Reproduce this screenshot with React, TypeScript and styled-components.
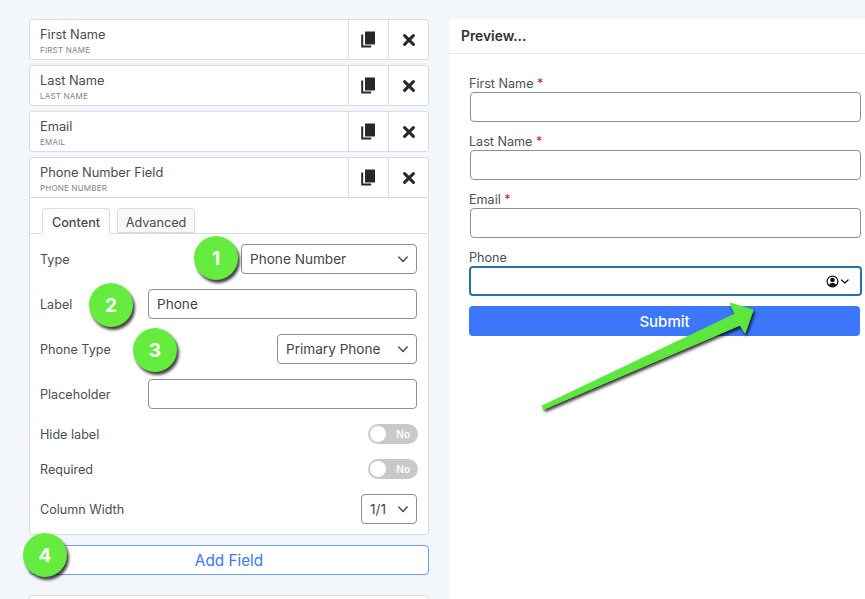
import React from "react";
import styled, { createGlobalStyle } from "styled-components";

const Global = createGlobalStyle`
  html, body { margin: 0; padding: 0; background: #f3f7fb; }
  body { font-family: Inter, "Liberation Sans", sans-serif; color: #454b53; -webkit-font-smoothing: antialiased; }
  * { box-sizing: border-box; }
`;

const Page = styled.div`
  position: relative;
  width: 865px;
  height: 599px;
  overflow: hidden;
  display: flex;
  gap: 20px;
  padding: 19px 0 0 29px;
`;
const LeftColumn = styled.div`
  width: 400px;
  flex: none;
  display: flex;
  flex-direction: column;
  gap: 5px;
`;
const Card = styled.div`
  flex: none;
  background: #fff;
  border: 1px solid #d9dde1;
  border-radius: 3px;
`;
const CardHead = styled.div`
  display: flex;
  height: 39px;
`;
const Titles = styled.div`
  flex: 1;
  padding: 7px 0 0 10px;
`;
const Title = styled.div`
  font-size: 12.8px;
  line-height: 16px;
  color: #464c54;
`;
const Sub = styled.div`
  font-size: 8px;
  line-height: 10px;
  margin-top: 2px;
  letter-spacing: 0.2px;
  color: #80858b;
  text-transform: uppercase;
`;
const IconCell = styled.div<{ $w: number }>`
  width: ${(p) => p.$w}px;
  display: flex;
  align-items: center;
  justify-content: center;
  border-left: 1px solid #d9dde1;
  color: #26282b;
`;
const Tabs = styled.div`
  display: flex;
  gap: 7px;
  height: 37px;
  padding: 10px 0 0 12px;
  border-top: 1px solid #d9dde1;
  border-bottom: 1px solid #d9dde1;
`;
const Tab = styled.div<{ $active?: boolean; $w: number }>`
  width: ${(p) => p.$w}px;
  height: ${(p) => (p.$active ? 26 : 25)}px;
  padding-top: ${(p) => (p.$active ? 2 : 3)}px;
  display: flex;
  align-items: center;
  justify-content: center;
  font-size: 12.7px;
  font-weight: ${(p) => (p.$active ? 500 : 400)};
  color: #464c54;
  background: ${(p) => (p.$active ? "#fff" : "#f8f8f8")};
  border: 1px solid #d9dde1;
  border-bottom: ${(p) => (p.$active ? "none" : "1px solid #d9dde1")};
  border-radius: 3px 3px 0 0;
`;
const TabBody = styled.div`
  display: flex;
  flex-direction: column;
  gap: 15px;
  padding: 10px 11px 10px 10px;
`;
const Row = styled.div`
  display: flex;
  align-items: center;
  justify-content: space-between;
`;
const RowLabel = styled.div`
  font-size: 12.6px;
  color: #4a5057;
`;
const Field = styled.div<{ $w?: number }>`
  width: ${(p) => (p.$w ? `${p.$w}px` : "100%")};
  height: 30px;
  flex: none;
  display: flex;
  align-items: center;
  justify-content: space-between;
  padding: 0 8px;
  background: #fff;
  border: 1px solid #8c8f94;
  border-radius: 4px;
  font-size: 13.6px;
  color: #3f444b;
`;
const Toggle = styled.div`
  position: relative;
  width: 50px;
  height: 20px;
  margin-right: -1px;
  border-radius: 10px;
  background: #c9c9c9;
  color: #fff;
  font-size: 10px;
  font-weight: 600;
  display: flex;
  align-items: center;
  justify-content: flex-end;
  padding-right: 8px;
`;
const Knob = styled.span`
  position: absolute;
  left: 2px;
  top: 2px;
  width: 16px;
  height: 16px;
  border-radius: 50%;
  background: #fff;
`;
const AddButton = styled.div`
  margin-top: 5px;
  height: 30px;
  flex: none;
  display: flex;
  align-items: center;
  justify-content: center;
  background: #fff;
  border: 1px solid #6ea0f5;
  border-radius: 4px;
  color: #3d76f0;
  font-size: 15.3px;
`;
const NextCard = styled(Card)`
  margin-top: 15px;
  height: 41px;
`;
const Preview = styled.div`
  flex: 1;
  min-width: 0;
  background: #fff;
  border-radius: 3px 0 0 0;
`;
const PreviewHead = styled.div`
  height: 35px;
  padding: 9px 12px 0;
  font-size: 13.8px;
  line-height: 17px;
  font-weight: 600;
  color: #2f3338;
  border-bottom: 1px solid #e6e9ec;
`;
const Form = styled.div`
  display: flex;
  flex-direction: column;
  padding: 22px 4px 0 20px;
`;
const Group = styled.div`
  height: 58px;
`;
const FormLabel = styled.div`
  height: 16px;
  font-size: 12.6px;
  line-height: 15px;
  color: #4a5057;
`;
const Star = styled.span`
  color: #c0202c;
`;
const FormInput = styled.div<{ $focus?: boolean }>`
  margin-left: 1px;
  height: 30px;
  display: flex;
  align-items: center;
  justify-content: flex-end;
  padding-right: 10px;
  background: #fff;
  border: ${(p) => (p.$focus ? "2px solid #2f6fa8" : "1px solid #8c8f94")};
  border-radius: 4px;
  ${(p) => p.$focus && "margin-left: 0; margin-right: -1px;"}
`;
const Submit = styled.div`
  margin: -2px 1px 0 0;
  height: 30px;
  display: flex;
  align-items: center;
  justify-content: center;
  background: #3b76fb;
  border-radius: 4px;
  color: #fff;
  font-size: 15px;
  font-weight: 500;
`;
const Badge = styled.div<{ $x: number; $y: number }>`
  position: absolute;
  left: ${(p) => p.$x - 22}px;
  top: ${(p) => p.$y - 22}px;
  width: 44px;
  height: 44px;
  border-radius: 50%;
  background: #65ec3f;
  box-shadow: 2px 3px 3px rgba(0, 0, 0, 0.75);
  color: #fff;
  font-size: 19px;
  font-weight: 700;
  display: flex;
  align-items: center;
  justify-content: center;
`;
const ArrowSvg = styled.svg`
  position: absolute;
  left: 530px;
  top: 295px;
`;

const Copy = () => (
  <svg width="15" height="17" viewBox="0 0 15 17">
    <path d="M4 0.500h10v13H4z" fill="currentColor" />
    <path d="M1.200 3.500V15.500h9" fill="none" stroke="currentColor" strokeWidth="2" />
  </svg>
);
const Close = () => (
  <svg width="12" height="12" viewBox="0 0 12 12">
    <path d="M1.600 1.600l8.800 8.800M10.400 1.600l-8.800 8.800" stroke="currentColor" strokeWidth="3" strokeLinecap="round" />
  </svg>
);
const Chevron = () => (
  <svg width="10" height="7" viewBox="0 0 10 7">
    <path d="M0.800 1L5 5.400 9.200 1" fill="none" stroke="#4a4f55" strokeWidth="1.500" strokeLinecap="round" strokeLinejoin="round" />
  </svg>
);
const PhoneIcon = () => (
  <svg width="24" height="13" viewBox="0 0 24 13">
    <circle cx="6.500" cy="6.500" r="5.400" fill="none" stroke="#111" strokeWidth="1.200" />
    <circle cx="6.500" cy="5" r="2.300" fill="#111" />
    <path d="M2.800 10c1-1.600 2.200-2 3.700-2s2.700.4 3.700 2c-1 1-2.200 1.600-3.700 1.600S3.800 11 2.800 10z" fill="#111" />
    <path d="M15.500 5l3.300 3 3.300-3" fill="none" stroke="#111" strokeWidth="1.200" strokeLinecap="round" strokeLinejoin="round" />
  </svg>
);

const Head = ({ title, sub }: { title: string; sub: string }) => (
  <CardHead>
    <Titles>
      <Title>{title}</Title>
      <Sub>{sub}</Sub>
    </Titles>
    <IconCell $w={40}>
      <Copy />
    </IconCell>
    <IconCell $w={40}>
      <Close />
    </IconCell>
  </CardHead>
);

export default function App() {
  return (
    <Page>
      <Global />
      <LeftColumn>
        <Card><Head title="First Name" sub="First Name" /></Card>
        <Card><Head title="Last Name" sub="Last Name" /></Card>
        <Card><Head title="Email" sub="Email" /></Card>
        <Card>
          <Head title="Phone Number Field" sub="Phone Number" />
          <Tabs>
            <Tab $active $w={68}>Content</Tab>
            <Tab $w={78}>Advanced</Tab>
          </Tabs>
          <TabBody>
            <Row>
              <RowLabel>Type</RowLabel>
              <Field $w={176}>Phone Number<Chevron /></Field>
            </Row>
            <Row>
              <RowLabel>Label</RowLabel>
              <Field $w={269}>Phone</Field>
            </Row>
            <Row>
              <RowLabel>Phone Type</RowLabel>
              <Field $w={140}>Primary Phone<Chevron /></Field>
            </Row>
            <Row>
              <RowLabel>Placeholder</RowLabel>
              <Field $w={269} />
            </Row>
            <Row>
              <RowLabel>Hide label</RowLabel>
              <Toggle><Knob />No</Toggle>
            </Row>
            <Row>
              <RowLabel>Required</RowLabel>
              <Toggle><Knob />No</Toggle>
            </Row>
            <Row>
              <RowLabel>Column Width</RowLabel>
              <Field $w={56}>1/1<Chevron /></Field>
            </Row>
          </TabBody>
        </Card>
        <AddButton>Add Field</AddButton>
        <NextCard />
      </LeftColumn>
      <Preview>
        <PreviewHead>Preview...</PreviewHead>
        <Form>
          <Group>
            <FormLabel>First Name <Star>*</Star></FormLabel>
            <FormInput />
          </Group>
          <Group>
            <FormLabel>Last Name <Star>*</Star></FormLabel>
            <FormInput />
          </Group>
          <Group>
            <FormLabel>Email <Star>*</Star></FormLabel>
            <FormInput />
          </Group>
          <Group>
            <FormLabel>Phone</FormLabel>
            <FormInput $focus><PhoneIcon /></FormInput>
          </Group>
          <Submit>Submit</Submit>
        </Form>
      </Preview>
      <Badge $x={216} $y={258}>1</Badge>
      <Badge $x={111} $y={305}>2</Badge>
      <Badge $x={155} $y={350}>3</Badge>
      <Badge $x={45} $y={555}>4</Badge>
      <ArrowSvg width="240" height="125" viewBox="0 0 240 125">
        <defs>
          <filter id="sh" x="-10%" y="-10%" width="125%" height="130%">
            <feDropShadow dx="1.500" dy="2.500" stdDeviation="1.500" floodColor="#000" floodOpacity="0.8" />
          </filter>
        </defs>
        <polygon
          points="12,111 205,19 200,8 223,15 215,38 210,30 14,114"
          fill="#5de63b"
          stroke="#5de63b"
          strokeWidth="1"
          strokeLinejoin="round"
          filter="url(#sh)"
        />
      </ArrowSvg>
    </Page>
  );
}
